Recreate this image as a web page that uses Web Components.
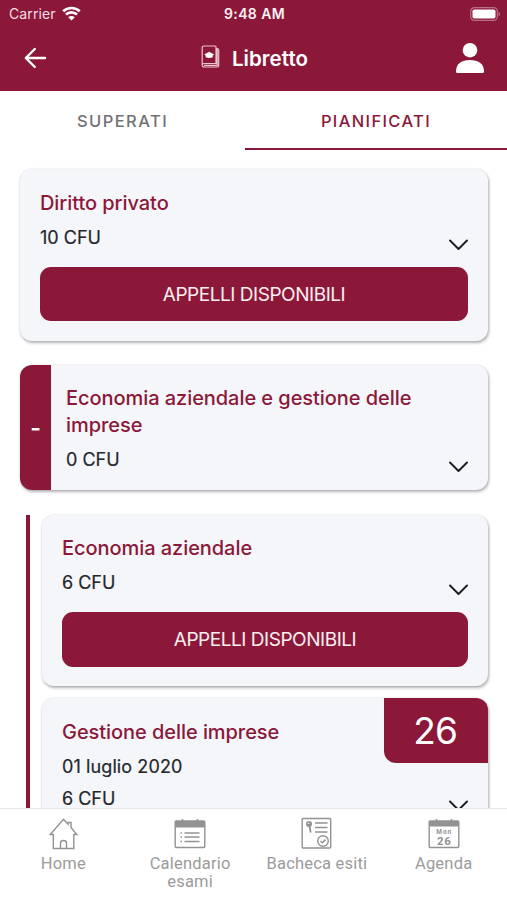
<!DOCTYPE html>
<html lang="it">
<head>
<meta charset="utf-8">
<title>Libretto</title>
<style>
html,body{margin:0;height:100%}
body{background:#fff;font-family:Inter,"Liberation Sans",sans-serif;overflow:hidden}
</style>
</head>
<body>
<libretto-app></libretto-app>
<script>
function define(name, html, after) {
  const t = document.createElement('template');
  t.innerHTML = '<style>*{box-sizing:border-box}svg{display:block}:host{--brand:#8c1839}</style>' + html;
  customElements.define(name, class extends HTMLElement {
    connectedCallback() {
      if (this.shadowRoot) return;
      this.attachShadow({mode: 'open'}).append(t.content.cloneNode(true));
      if (after) after(this, this.shadowRoot);
    }
  });
}

define('status-bar', `<style>
:host{display:grid;grid-template-columns:1fr auto 1fr;align-items:center;height:28px;padding:0 6px 0 9px;color:#fff}
.l{display:flex;align-items:center;gap:6px;font-size:14px;line-height:18px;letter-spacing:.12px;color:#f4dfe6}
.l svg{margin-top:-2px}
.c{font-size:14px;font-weight:600;line-height:18px;letter-spacing:.4px;color:#fbeff3;margin-left:-1px}
.r{justify-self:end;margin-top:-1px}
</style>
<div class="l"><span>Carrier</span><svg width="19" height="15" viewBox="0 0 19 15" fill="none" stroke="#fff" stroke-width="2.700"><path d="M1.200 5.200C6 .9 13 .9 17.800 5.200M4 8.600c3.200-2.900 7.800-2.900 11 0"/><path d="M6.200 11.300c2-1.800 4.600-1.800 6.600 0L9.500 14.600z" fill="#fff" stroke="none"/></svg></div>
<div class="c">9:48 AM</div>
<svg class="r" width="31" height="14" viewBox="0 0 31 14"><rect x=".7" y=".7" width="26.600" height="12.600" rx="3.600" fill="none" stroke="#b9708a" stroke-width="1.200"/><rect x="2.500" y="2.500" width="23" height="9" rx="1.800" fill="#fff"/><path d="M28.700 5v4c1.500-.6 1.500-3.400 0-4z" fill="#c98ba0"/></svg>`);

define('title-bar', `<style>
:host{display:grid;grid-template-columns:60px 1fr 60px;align-items:center;height:63px;padding:0 0 3px;color:#fff}
.t{display:flex;align-items:center;justify-content:center;gap:12px;padding:1px 0 0 2px;font-size:20.500px;font-weight:600;line-height:24px;letter-spacing:.05px}
.t svg{margin-top:-4px}
.back{margin-left:24px}.user{margin-left:8px}
</style>
<svg class="back" width="23" height="22" viewBox="0 0 23 22" fill="none" stroke="#fff" stroke-width="2.400" stroke-linecap="round" stroke-linejoin="round"><path d="M21 11H2M10.800 2L1.800 11l9 9"/></svg>
<div class="t"><svg width="19" height="23" viewBox="0 0 19 23" fill="none" stroke="#e9c6d1" stroke-width="1.200"><path d="M3 1h11q1 0 1 1v16.500H3A1.700 1.700 0 0 0 3 22h13.500q1.200 0 1.200-1.200V5q0-1.200-1.500-1.500M1.200 20V3Q1.200 1 3 1M16.200 3v17.300H3"/><path d="M3.200 9.500L8.200 6.800l5 2.700-1.500 1v1.800q-3.500 1.600-7 0v-1.800z" fill="#fff" stroke="none"/></svg><span>Libretto</span></div>
<svg class="user" width="30" height="32" viewBox="0 0 30 32" fill="#fff"><circle cx="15" cy="8.200" r="7.300"/><path d="M1 29.500C1 21.500 7 18 15 18s14 3.500 14 11.500q0 1.500-1.500 1.500h-25Q1 31 1 29.500z"/></svg>`);

define('tab-item', `<style>
:host{display:flex;align-items:center;justify-content:center;height:59px;padding-top:2px;font-size:16.500px;font-weight:500;letter-spacing:1.450px;line-height:20px;color:#717274;border-bottom:2.500px solid transparent}
:host([active]){color:var(--brand);border-color:var(--brand);letter-spacing:1.350px}
</style><slot></slot>`);

define('pill-button', `<style>
:host{display:flex;align-items:center;justify-content:center;height:54.500px;padding-top:2px;border-radius:11px;background:var(--brand);color:#fceef2;font-size:19px;letter-spacing:-.46px;line-height:24px}
</style><span><slot></slot></span>`);

define('exam-card', `<style>
:host{display:flex;position:relative;background:#f4f6fa;border-radius:12px;box-shadow:1px 2px 3px rgba(40,40,50,.34),0 0 2px rgba(40,40,50,.16)}
.strip{width:31px;flex:none;background:var(--brand);border-radius:12px 0 0 12px;color:#fff;font-size:23px;font-weight:600;display:flex;align-items:center;justify-content:center}
.body{flex:1;padding:var(--top,21px) 20px 0 var(--left,20px);min-width:0}
h2{margin:0;font-size:20px;font-weight:500;line-height:27px;letter-spacing:-.06px;color:var(--brand)}
.d,.f{font-size:18px;line-height:27px;color:#24272c;-webkit-text-stroke:.2px #24272c}
.d{margin:7px 0 -2px;letter-spacing:.1px}
.f{display:flex;justify-content:space-between;margin-top:7px}
.f svg{margin-top:15px}
.grade{position:absolute;top:0;right:0;width:104.500px;height:65px;padding-right:1px;background:var(--brand);border-radius:0 12px 0 12px;color:#fff;font-size:37px;letter-spacing:-.8px;display:flex;align-items:center;justify-content:center}
::slotted(pill-button){margin-top:16px}
</style>
<div class="strip"><span>-</span></div>
<div class="body"><h2></h2><div class="d"></div><div class="f"><span class="cfu"></span><svg width="19" height="12" viewBox="0 0 19 12" fill="none" stroke="#1c1f24" stroke-width="2" stroke-linecap="round" stroke-linejoin="round"><path d="M1 1.500l8.500 8.500L18 1.500"/></svg></div><slot></slot></div>
<div class="grade"></div>`, (h, r) => {
  const put = (sel, attr) => {
    const el = r.querySelector(sel);
    if (h.hasAttribute(attr)) el.textContent = h.getAttribute(attr); else el.remove();
  };
  put('h2', 'name'); put('.d', 'date'); put('.cfu', 'cfu'); put('.grade', 'grade');
  if (!h.hasAttribute('strip')) r.querySelector('.strip').remove();
});

define('nav-item', `<style>
:host{display:flex;flex-direction:column;align-items:center;gap:4px;padding-top:8px;font:16.500px/18px Roboto,sans-serif;color:#9b9b9b;text-align:center;letter-spacing:.2px}
</style><slot name="icon"></slot><span><slot></slot></span>`);

define('libretto-app', `<style>
:host{display:flex;flex-direction:column;height:900px;width:507px;overflow:hidden}
header{background:var(--brand);flex:none}
.tabs{display:grid;grid-template-columns:245px 262px;flex:none}
main{flex:1;min-height:0;overflow:hidden;padding:18.500px 19px 0 20px}
.group{display:flex;flex-direction:column;gap:12px;margin-top:24.500px;border-left:4px solid var(--brand);margin-left:6px;padding-left:11.500px}
nav{flex:none;height:92px;border-top:1px solid #e6e6e6;background:#fff;display:grid;grid-template-columns:repeat(4,1fr)}
</style>
<header><status-bar></status-bar><title-bar></title-bar></header>
<div class="tabs"><tab-item>SUPERATI</tab-item><tab-item active>PIANIFICATI</tab-item></div>
<main>
<exam-card name="Diritto privato" cfu="10 CFU" style="height:172.500px"><pill-button style="padding-top:3px">APPELLI DISPONIBILI</pill-button></exam-card>
<exam-card strip name="Economia aziendale e gestione delle imprese" cfu="0 CFU" style="height:125px;margin-top:24px;--top:20.400px;--left:15px"></exam-card>
<div class="group">
<exam-card name="Economia aziendale" cfu="6 CFU" style="height:171px;--top:20px;--left:20.500px"><pill-button style="margin-top:16.500px">APPELLI DISPONIBILI</pill-button></exam-card>
<exam-card name="Gestione delle imprese" date="01 luglio 2020" cfu="6 CFU" grade="26" style="height:190px;--left:20.500px"></exam-card>
</div>
</main>
<nav>
<nav-item><svg slot="icon" width="31" height="34" viewBox="0 0 31 34" fill="none" stroke="#929292" stroke-width="1.400"><path d="M5.300 17.500H2.200L15.500 2.200l4.500 5V5.500h3v5l5.800 7h-3v14H5.300zM12.500 31.500V26q0-2.500 3-2.500t3 2.500v5.500"/></svg>Home</nav-item>
<nav-item><svg slot="icon" width="32" height="34" viewBox="0 0 32 34" fill="none" stroke="#929292"><rect x="1.200" y="4" width="29.600" height="26.500" rx="1" stroke-width="1.400"/><path d="M1 4h30v6.500H1z" fill="#929292" stroke="none"/><path d="M8.500 2v3M23.500 2v3" stroke-width="1.500"/><path d="M10.500 16h15M10.500 20h15M10.500 24.500h15M6.500 16h1.500M6.500 20h1.500M6.500 24.500h1.500" stroke-width="1.300"/></svg>Calendario<br>esami</nav-item>
<nav-item><svg slot="icon" width="31" height="34" viewBox="0 0 31 34" fill="none" stroke="#929292"><rect x="1.200" y="1.500" width="28.500" height="29.500" rx="1" stroke-width="1.400"/><circle cx="8" cy="7" r="3" fill="#929292" stroke="none"/><circle cx="7.500" cy="6.300" r=".8" fill="#fff" stroke="none"/><path d="M8.500 9l1.200 6.500" stroke-width="1.800"/><path d="M14 6h12.500M14 10.500h12.500M14 15h12.500" stroke-width="1.700"/><circle cx="22" cy="24" r="5.300" stroke-width="1.400"/><path d="M19.500 24l1.800 1.800 3.200-3.200" stroke-width="1.500"/></svg>Bacheca esiti</nav-item>
<nav-item><svg slot="icon" width="32" height="34" viewBox="0 0 32 34" fill="none" stroke="#929292"><rect x="1.200" y="4" width="29.600" height="26.500" rx="1" stroke-width="1.400"/><path d="M1 4h30v5.500H1z" fill="#929292" stroke="none"/><path d="M8.500 2v3M23.500 2v3" stroke-width="1.500"/><g fill="#929292" stroke="none" text-anchor="middle" font-family="Roboto" font-weight="700"><text x="16.200" y="16.500" font-size="6.500" letter-spacing="1">Mon</text><text x="16.300" y="27.800" font-size="11.500" letter-spacing=".8">26</text></g></svg>Agenda</nav-item>
</nav>`);
</script>
</body>
</html>
